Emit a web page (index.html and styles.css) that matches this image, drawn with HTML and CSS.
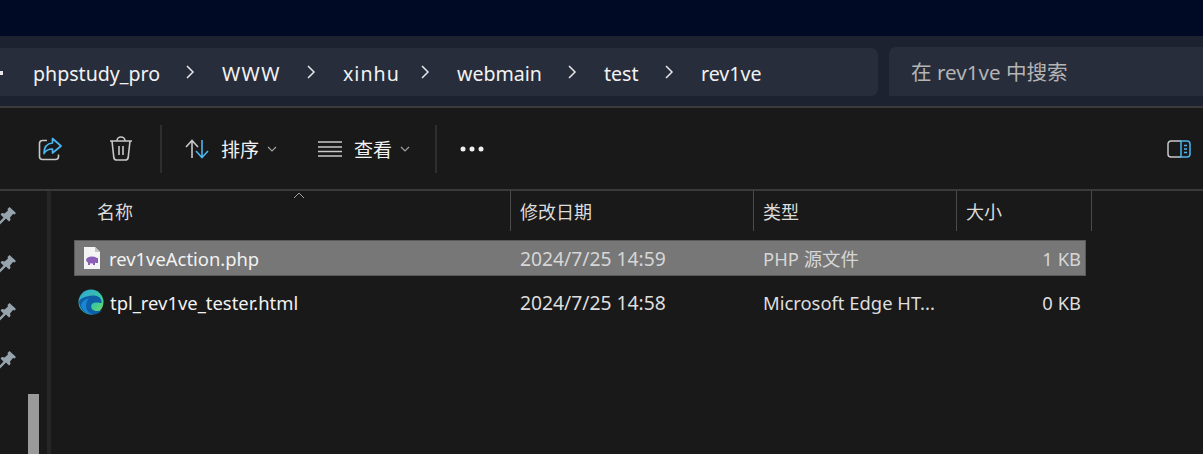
FILE: index.html
```html
<!DOCTYPE html>
<html>
  <head>
    <meta charset="utf-8" />
    <meta name="viewport" content="width=device-width, initial-scale=1" />
    <link rel="stylesheet" href="styles.css">
  </head>
  <body>
    <div class="titlebar"></div>

    <div class="addressbar">
      <div class="crumbs">
        <span class="stub"></span>
        <span class="crumb crumb-php">phpstudy_pro</span>
        <svg class="sep" width="10" height="16" viewBox="0 0 10 16"><path d="M2 2l6 6-6 6" /></svg>
        <span class="crumb crumb-www">WWW</span>
        <svg class="sep" width="10" height="16" viewBox="0 0 10 16"><path d="M2 2l6 6-6 6" /></svg>
        <span class="crumb crumb-xinhu">xinhu</span>
        <svg class="sep" width="10" height="16" viewBox="0 0 10 16"><path d="M2 2l6 6-6 6" /></svg>
        <span class="crumb crumb-webmain">webmain</span>
        <svg class="sep" width="10" height="16" viewBox="0 0 10 16"><path d="M2 2l6 6-6 6" /></svg>
        <span class="crumb crumb-test">test</span>
        <svg class="sep" width="10" height="16" viewBox="0 0 10 16"><path d="M2 2l6 6-6 6" /></svg>
        <span class="crumb">rev1ve</span>
      </div>
      <div class="search">在 rev1ve 中搜索</div>
    </div>

    <div class="toolbar">
      <button class="tool tool-share" type="button">
        <svg width="24" height="24" viewBox="0 0 24 24" fill="none">
          <path d="M9 3.500H4.500a3 3 0 0 0-3 3v13a3 3 0 0 0 3 3h13a3 3 0 0 0 3-3v-2" stroke="#c8c8c8" stroke-width="1.600" />
          <path d="M14.500 1.500l8.500 7.500-8.500 7v-4c-4 0-6.500 1-8.500 4.500 0-6 3-10 8.500-10.500z" stroke="#4cb4ee" stroke-width="1.700" stroke-linejoin="round" />
        </svg>
      </button>
      <button class="tool tool-trash" type="button">
        <svg width="24" height="26" viewBox="0 0 24 26" fill="none" stroke="#c8c8c8" stroke-width="1.600">
          <path d="M1 5h22M3 5l1.800 16.500a3 3 0 0 0 3 2.500h8.400a3 3 0 0 0 3-2.500L21 5M8 5a4 4 0 0 1 8 0" />
          <path d="M10 10v9M14 10v9" />
        </svg>
      </button>
      <span class="divider"></span>
      <button class="tool tool-sort" type="button">
        <svg width="24" height="20" viewBox="0 0 24 20" fill="none" stroke-width="1.600">
          <path d="M7 19V2M1 8l6-6.500L13 8" stroke="#c8c8c8" />
          <path d="M17 1v17M11 12l6 6.500 6-6.500" stroke="#4cb4ee" />
        </svg>
        <span class="tool-label">排序</span>
        <svg class="caret" width="10" height="6" viewBox="0 0 10 6"><path d="M1 1l4 4 4-4" /></svg>
      </button>
      <button class="tool tool-view" type="button">
        <svg width="24" height="16" viewBox="0 0 24 16" fill="none" stroke="#c8c8c8" stroke-width="1.500">
          <path d="M0 1h24M0 6h24M0 10.500h24M0 15h24" />
        </svg>
        <span class="tool-label">查看</span>
        <svg class="caret" width="10" height="6" viewBox="0 0 10 6"><path d="M1 1l4 4 4-4" /></svg>
      </button>
      <span class="divider divider-last"></span>
      <button class="tool tool-more" type="button">
        <svg width="24" height="6" viewBox="0 0 24 6" fill="#f0f0f0">
          <circle cx="3" cy="3" r="2.500" /><circle cx="12" cy="3" r="2.500" /><circle cx="21" cy="3" r="2.500" />
        </svg>
      </button>
      <button class="tool tool-panel" type="button">
        <svg width="24" height="18" viewBox="0 0 24 18" fill="none" stroke-width="1.500">
          <path d="M14 1H4a3 3 0 0 0-3 3v10a3 3 0 0 0 3 3h10" stroke="#c8c8c8" />
          <path d="M14 1h6a3 3 0 0 1 3 3v10a3 3 0 0 1-3 3h-6z" stroke="#4cb4ee" />
          <path d="M17 5.500h3M17 9h3M17 12.500h3" stroke="#4cb4ee" />
        </svg>
      </button>
    </div>

    <div class="main">
      <div class="sidebar">
        <svg class="pin" viewBox="0 0 18 18"><path d="M11.500 0l6.500 6-1.500 1.500-1.500-.5-3 3.500.5 2.500-1.500 1.500-3-3L2 17.500 .5 16l5-5.500-3-3L4 6l2.500.5L10 3.500 9.500 2z" /></svg>
        <svg class="pin" viewBox="0 0 18 18"><path d="M11.500 0l6.500 6-1.500 1.500-1.500-.5-3 3.500.5 2.500-1.500 1.500-3-3L2 17.500 .5 16l5-5.500-3-3L4 6l2.500.5L10 3.500 9.500 2z" /></svg>
        <svg class="pin" viewBox="0 0 18 18"><path d="M11.500 0l6.500 6-1.500 1.500-1.500-.5-3 3.500.5 2.500-1.500 1.500-3-3L2 17.500 .5 16l5-5.500-3-3L4 6l2.500.5L10 3.500 9.500 2z" /></svg>
        <svg class="pin pin-last" viewBox="0 0 18 18"><path d="M11.500 0l6.500 6-1.500 1.500-1.500-.5-3 3.500.5 2.500-1.500 1.500-3-3L2 17.500 .5 16l5-5.500-3-3L4 6l2.500.5L10 3.500 9.500 2z" /></svg>
        <div class="thumb"></div>
      </div>

      <div class="list">
        <svg class="sort-arrow" width="12" height="7" viewBox="0 0 12 7"><path d="M1 6l5-5 5 5" /></svg>
        <div class="head">
          <div class="col col-name">名称</div>
          <div class="col">修改日期</div>
          <div class="col">类型</div>
          <div class="col">大小</div>
        </div>

        <div class="row row-selected">
          <div class="cell cell-name">
            <svg class="file-icon" width="18" height="22" viewBox="0 0 18 22">
              <path d="M1 0h11l5 5v17H1z" fill="#f4f4f4" />
              <path d="M12 0v5h5z" fill="#c4c4c4" />
              <ellipse cx="9" cy="13" rx="6" ry="3.500" fill="#8b5fb8" />
              <path d="M5 15h2v3H5zM10 15h2v3h-2zM13 11h2v5h-2z" fill="#8b5fb8" />
            </svg>
            <span>rev1veAction.php</span>
          </div>
          <div class="cell cell-dim cell-date">2024/7/25 14:59</div>
          <div class="cell cell-dim">PHP 源文件</div>
          <div class="cell cell-dim cell-size">1 KB</div>
        </div>

        <div class="row">
          <div class="cell cell-name">
            <svg class="edge-icon" width="26" height="26" viewBox="0 0 26 26">
              <defs>
                <linearGradient id="edgeTop" x1="0" y1="0" x2="1" y2="1">
                  <stop offset="0" stop-color="#2fa5dc" />
                  <stop offset="0.600" stop-color="#38c8a0" />
                  <stop offset="1" stop-color="#7ddc5a" />
                </linearGradient>
              </defs>
              <circle cx="13" cy="13" r="12.500" fill="url(#edgeTop)" />
              <path d="M1 13C2 22 9 25.500 15 25.500c4 0 7-2 9-4.500-3 1.500-8 1.500-10-1-1.500-2-1-5 1.500-6 3-1 6 0 8 0 1-5-4-8-9-7.500C8 7 2 9 1 13z" fill="#0f5fa8" />
              <path d="M8 17c0 4 3 7.500 7 8.500-6 0-11-4-12-9.500 1-3 4-6 8-6.500-2 2-3 4.500-3 7.500z" fill="#1b86d2" />
            </svg>
            <span>tpl_rev1ve_tester.html</span>
          </div>
          <div class="cell cell-date">2024/7/25 14:58</div>
          <div class="cell">Microsoft Edge HT...</div>
          <div class="cell cell-size">0 KB</div>
        </div>
      </div>
    </div>
  </body>
</html>
```

FILE: styles.css
```css
* {
  box-sizing: border-box;
}

html,
body {
  height: 100%;
}

body {
  margin: 0;
  display: flex;
  flex-direction: column;
  overflow: hidden;
  background: #191919;
  color: #f2f2f2;
  font-family: "Noto Sans", "Noto Sans CJK SC", sans-serif;
  font-size: 19px;
}

button {
  border: 0;
  padding: 0;
  background: none;
  color: inherit;
  font: inherit;
}

.titlebar {
  height: 36px;
  background: #000a24;
}

/* address row */
.addressbar {
  height: 72px;
  display: flex;
  gap: 11px;
  padding-top: 12px;
  background: #1c2230;
  border-bottom: 2px solid #3a3a3a;
}

.crumbs {
  width: 878px;
  height: 48px;
  display: flex;
  align-items: center;
  padding-top: 2px;
  font-size: 19.600px;
  background: #282d3b;
  border-radius: 0 7px 7px 0;
}

.stub {
  width: 3px;
  height: 4px;
  margin-right: 30px;
  background: #e6e6e6;
}

.crumb-php {
  width: 152px;
}

.crumb-www {
  width: 84px;
  letter-spacing: 1.400px;
}

.crumb-xinhu {
  width: 77px;
  letter-spacing: 1px;
}

.crumb-webmain {
  width: 110px;
}

.crumb-test {
  width: 60px;
}

.sep {
  margin-top: -2px;
  margin-right: 27px;
  fill: none;
  stroke: #e6e6e6;
  stroke-width: 1.500;
}

.search {
  flex: 1;
  height: 49px;
  margin-top: -1px;
  padding-left: 22px;
  line-height: 50px;
  font-size: 20.600px;
  color: #b4b4b4;
  background: #282d3b;
  border-radius: 7px 0 0 0;
}

/* command bar */
.toolbar {
  height: 83px;
  display: flex;
  align-items: center;
  background: #191919;
  border-bottom: 2px solid #3a3a3a;
}

.tool {
  display: flex;
  align-items: center;
}

.tool-share {
  margin-left: 38px;
}

.tool-trash {
  margin-left: 47px;
}

.divider {
  width: 2px;
  height: 48px;
  margin-left: 27px;
  background: #2e2e2e;
}

.tool-sort {
  margin-left: 23px;
}

.tool-view {
  margin-left: 41px;
}

.tool-label {
  margin-left: 12px;
  margin-right: 8px;
}

.caret {
  fill: none;
  stroke: #a0a0a0;
  stroke-width: 1.200;
}

.divider-last {
  margin-left: 25px;
}

.tool-more {
  margin-left: 23px;
}

.tool-panel {
  margin-left: auto;
  margin-right: 12px;
}

/* nav pane + file list */
.main {
  flex: 1;
  min-height: 0;
  display: flex;
}

.sidebar {
  width: 51px;
  display: flex;
  flex-direction: column;
  padding-top: 16px;
  border-right: 4px solid #262626;
}

.pin {
  flex-shrink: 0;
  width: 18px;
  height: 18px;
  margin-left: -2px;
  margin-bottom: 30px;
  fill: #98a4ad;
}

.pin-last {
  margin-bottom: 0;
}

.thumb {
  flex-shrink: 0;
  width: 11px;
  height: 60px;
  margin-top: auto;
  margin-left: 28px;
  background: #9a9a9a;
}

.list {
  position: relative;
  flex: 1;
  padding-left: 23px;
}

.sort-arrow {
  position: absolute;
  left: 242px;
  top: 1px;
  fill: none;
  stroke: #a0a0a0;
  stroke-width: 1;
}

.head {
  height: 40px;
  display: grid;
  grid-template-columns: 437px 243px 203px 135px;
  margin-bottom: 9px;
  font-size: 18px;
  color: #dcdcdc;
}

.col {
  display: flex;
  align-items: center;
  padding-left: 9px;
  border-right: 1px solid #4a4a4a;
}

.col-name {
  padding-left: 23px;
}

.row {
  width: 1012px;
  height: 36px;
  margin-bottom: 8px;
  display: grid;
  grid-template-columns: 436px 243px 203px 130px;
  align-items: center;
  border: 1px solid transparent;
  font-size: 18.400px;
}

.row-selected {
  background: #777777;
  border-color: #5a5a5a;
}

.cell {
  padding-left: 9px;
  white-space: nowrap;
  color: #dedede;
}

.cell-name {
  display: flex;
  align-items: center;
  padding-left: 3px;
  color: #f2f2f2;
}

.file-icon {
  margin: 0 8px 0 5px;
}

.edge-icon {
  margin-right: 6px;
}

.cell-dim {
  color: #d6d6d6;
}

.cell-date {
  font-size: 19.300px;
}

.cell-size {
  padding-left: 0;
  padding-right: 6px;
  text-align: right;
}
```
